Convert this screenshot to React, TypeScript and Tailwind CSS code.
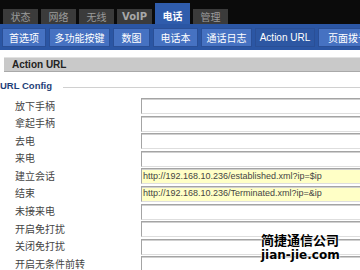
import React from 'react';

const tabs = ['状态', '网络', '无线', 'VoIP', '电话', '管理'];
const navItems = ['首选项', '多功能按键', '数图', '电话本', '通话日志', 'Action URL', '页面拨号'];

const rows: { label: string; value?: string }[] = [
  { label: '放下手柄' },
  { label: '拿起手柄' },
  { label: '去电' },
  { label: '来电' },
  { label: '建立会话', value: 'http://192.168.10.236/established.xml?ip=$ip' },
  { label: '结束', value: 'http://192.168.10.236/Terminated.xml?ip=&ip' },
  { label: '未接来电' },
  { label: '开启免打扰' },
  { label: '关闭免打扰' },
  { label: '开启无条件前转' },
  { label: '' },
];

const cjk = "font-['Noto_Sans_CJK_SC','Liberation_Sans',sans-serif]";

function TopTabs() {
  return (
    <div className="flex h-[24px] items-end gap-[3px] bg-[#0b0b0b] pl-[3px]">
      {tabs.map((t) => {
        const active = t === '电话';
        return (
          <div
            key={t}
            className={
              active
                ? `flex h-[21px] w-[35px] items-center justify-center bg-[#2f5cac] pt-[4px] text-[10px] font-bold text-white ${cjk}`
                : `flex h-[15px] w-[35px] items-center justify-center bg-[#3b3b3b] text-[10px] text-[#9c9c9c] ${cjk}`
            }
          >
            {t === 'VoIP' ? (
              <span className="font-['DejaVu_Sans',sans-serif] text-[10px] font-bold text-[#a8a8a8]">VoIP</span>
            ) : (
              t
            )}
          </div>
        );
      })}
    </div>
  );
}

function NavBar() {
  const widths = ['w-[44px]', 'w-[61px]', 'w-[37px]', 'w-[45px]', 'w-[51px]', 'w-[60px]', 'w-[60px]'];
  return (
    <div className="flex h-[26px] gap-[3px] bg-[#2b56a4] pl-[2px] pt-[4px] whitespace-nowrap">
      {navItems.map((n, i) => {
        const active = n === 'Action URL';
        return (
          <div
            key={n}
            className={`flex h-[19px] shrink-0 items-center justify-center border border-[#2a4f96] text-[10px] text-white ${widths[i]} ${
              active ? "bg-[#2d57a3] font-['Liberation_Sans',sans-serif]" : `bg-[#4672c2] ${cjk}`
            }`}
          >
            {n}
          </div>
        );
      })}
    </div>
  );
}

export default function App() {
  return (
    <div className="relative h-[270px] w-[360px] overflow-hidden bg-white">
      <TopTabs />
      <NavBar />

      <div className="ml-[4px] mt-[7px] flex h-[15px] items-center border-t border-t-[#e2e2e2] border-b border-b-[#a9a9a9] bg-[#c9c9c9] pl-[8px]">
        <span className="font-['Liberation_Sans',sans-serif] text-[10px] font-bold text-[#222]">Action URL</span>
      </div>

      <div className="mt-[7px] flex h-[14px] items-center">
        <span className="font-['Liberation_Sans',sans-serif] text-[9.5px] font-bold text-[#1f3f78]">
          URL Config
        </span>
        <div className="ml-[11px] mt-[2px] flex-1 border-t border-[#d0d0d0]" />
      </div>

      <div className="mt-[5px] flex flex-col">
        {rows.map((r, i) => (
          <div key={i} className="flex h-[17.6px] items-start">
            <div className={`w-[141px] shrink-0 pl-[15px] pt-[1.5px] text-[10px] leading-[12px] text-[#444] ${cjk}`}>
              {r.label}
            </div>
            <div
              className={`flex h-[16px] w-[300px] shrink-0 items-center border border-[#a4a4a4] border-b-[#dedede] border-r-[#dedede] pl-[1px] font-['Liberation_Sans',sans-serif] text-[9px] text-[#444] shadow-[inset_0_1px_0_#d0d0d0] ${
                r.value ? 'bg-[#ffffc6]' : 'bg-white'
              }`}
            >
              {r.value}
            </div>
          </div>
        ))}
      </div>

      <div className="absolute left-[261px] top-[233px] flex flex-col items-start leading-none text-black [text-shadow:0_0_2px_#fff,0_0_2px_#fff]">
        <span className={`text-[13px] font-bold ${cjk}`}>简捷通信公司</span>
        <span className="mt-[3px] font-['DejaVu_Sans',sans-serif] text-[12px] font-bold">jian-jie.com</span>
      </div>
    </div>
  );
}
